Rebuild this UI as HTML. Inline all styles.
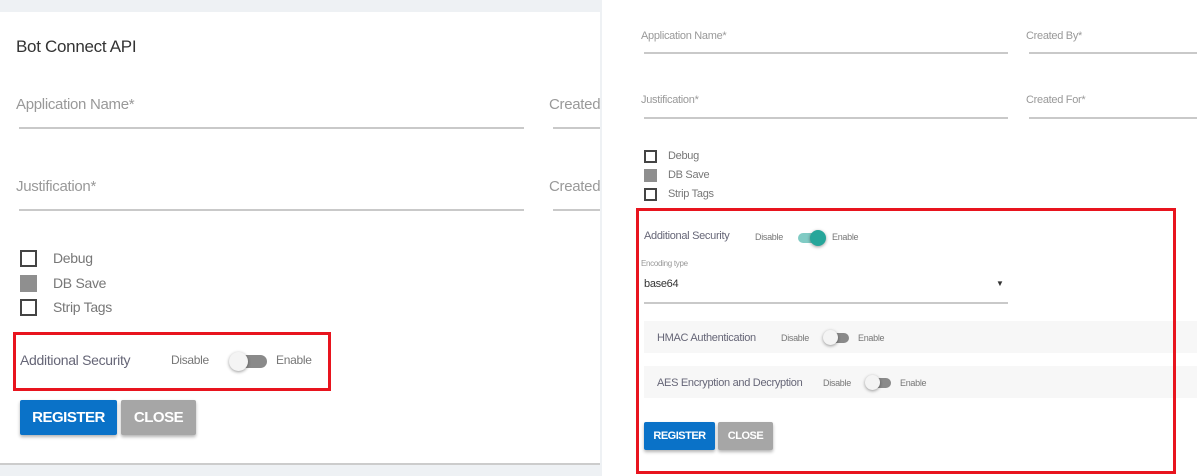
<!DOCTYPE html>
<html><head><meta charset="utf-8"><style>
*{margin:0;padding:0;box-sizing:border-box}
body{width:1197px;height:476px;position:relative;background:#fff;font-family:"Liberation Sans",Arial,sans-serif;overflow:hidden;color:#777;letter-spacing:-0.3px}
.a{position:absolute;white-space:nowrap}
.ln{position:absolute;height:2px;background:#c9c9c9}
.cb{position:absolute;border:2px solid #444;background:#fff}
.cbf{position:absolute;background:#8f8f8f}
.red{position:absolute;border:3px solid #e8141e}
.btn{position:absolute;color:#fff;font-weight:bold;display:flex;align-items:center;justify-content:center;border-radius:2px;box-shadow:0 2px 3px rgba(0,0,0,.3);letter-spacing:-0.5px}
.trk{position:absolute;border-radius:8px;background:#8a8a8a}
.knob{position:absolute;border-radius:50%;background:#f4f4f4;box-shadow:0 1px 3px rgba(0,0,0,.4)}
</style></head><body>
<div class="a" style="left:0;top:0;width:602px;height:12px;background:#eef1f4"></div>
<div class="a" style="left:0;top:463px;width:602px;height:13px;background:#eef1f4;border-top:2px solid #ccc"></div>
<div class="a" style="left:600px;top:0;width:2px;height:476px;background:#eef1f4"></div>
<div class="a" style="left:16px;top:37px;font-size:17px;color:#333">Bot Connect API</div>
<div class="a" style="left:16px;top:96px;font-size:15px;color:#999">Application Name*</div>
<div class="ln" style="left:19px;top:127px;width:505px"></div>
<div class="a" style="left:549px;top:96px;font-size:15px;color:#999;width:51px;overflow:hidden">Created</div>
<div class="ln" style="left:553px;top:127px;width:47px"></div>
<div class="a" style="left:16px;top:178px;font-size:15px;color:#999">Justification*</div>
<div class="ln" style="left:19px;top:209px;width:505px"></div>
<div class="a" style="left:549px;top:178px;font-size:15px;color:#999;width:51px;overflow:hidden">Created</div>
<div class="ln" style="left:553px;top:209px;width:47px"></div>
<div class="cb" style="left:20px;top:250px;width:17px;height:17px"></div>
<div class="a" style="left:53px;top:250px;font-size:14px;color:#777">Debug</div>
<div class="cbf" style="left:20px;top:275px;width:17px;height:17px"></div>
<div class="a" style="left:53px;top:275px;font-size:14px;color:#777">DB Save</div>
<div class="cb" style="left:20px;top:299px;width:17px;height:17px"></div>
<div class="a" style="left:53px;top:299px;font-size:14px;color:#777">Strip Tags</div>
<div class="red" style="left:13px;top:332px;width:318px;height:59px"></div>
<div class="a" style="left:20px;top:352px;font-size:14px;color:#667">Additional Security</div>
<div class="a" style="left:171px;top:353px;font-size:12px;color:#777">Disable</div>
<div class="trk" style="left:234px;top:355px;width:33px;height:13px"></div>
<div class="knob" style="left:229px;top:352px;width:19px;height:19px"></div>
<div class="a" style="left:276px;top:353px;font-size:12px;color:#777">Enable</div>
<div class="btn" style="left:20px;top:400px;width:97px;height:35px;background:#0a72c8;font-size:15px">REGISTER</div>
<div class="btn" style="left:121px;top:400px;width:75px;height:35px;background:#a6a6a6;font-size:15px">CLOSE</div>
<div class="a" style="left:641px;top:30px;font-size:11px;color:#999">Application Name*</div>
<div class="ln" style="left:644px;top:52px;width:364px"></div>
<div class="a" style="left:1026px;top:30px;font-size:11px;color:#999">Created By*</div>
<div class="ln" style="left:1029px;top:52px;width:168px"></div>
<div class="a" style="left:641px;top:94px;font-size:11px;color:#999">Justification*</div>
<div class="ln" style="left:644px;top:117px;width:364px"></div>
<div class="a" style="left:1026px;top:94px;font-size:11px;color:#999">Created For*</div>
<div class="ln" style="left:1029px;top:117px;width:168px"></div>
<div class="cb" style="left:644px;top:150px;width:13px;height:13px"></div>
<div class="a" style="left:668px;top:150px;font-size:11px;color:#777">Debug</div>
<div class="cbf" style="left:644px;top:169px;width:13px;height:13px"></div>
<div class="a" style="left:668px;top:169px;font-size:11px;color:#777">DB Save</div>
<div class="cb" style="left:644px;top:188px;width:13px;height:13px"></div>
<div class="a" style="left:668px;top:188px;font-size:11px;color:#777">Strip Tags</div>
<div class="a" style="left:644px;top:321px;width:553px;height:32px;background:#f7f7f7"></div>
<div class="a" style="left:644px;top:366px;width:553px;height:32px;background:#f7f7f7"></div>
<div class="red" style="left:636px;top:208px;width:540px;height:266px"></div>
<div class="a" style="left:644px;top:230px;font-size:11px;color:#667">Additional Security</div>
<div class="a" style="left:755px;top:232px;font-size:9px;color:#777">Disable</div>
<div class="trk" style="left:798px;top:233px;width:25px;height:10px;background:#80cbc4"></div>
<div class="knob" style="left:810px;top:230px;width:16px;height:16px;background:#26a69a"></div>
<div class="a" style="left:832px;top:232px;font-size:9px;color:#777">Enable</div>
<div class="a" style="left:641px;top:259px;font-size:8px;color:#999">Encoding type</div>
<div class="a" style="left:644px;top:278px;font-size:11px;color:#333">base64</div>
<div class="a" style="left:996px;top:279px;font-size:8px;color:#333">▼</div>
<div class="ln" style="left:644px;top:302px;width:364px"></div>
<div class="a" style="left:657px;top:332px;font-size:11px;color:#667">HMAC Authentication</div>
<div class="a" style="left:781px;top:333px;font-size:9px;color:#777">Disable</div>
<div class="trk" style="left:826px;top:333px;width:23px;height:10px"></div>
<div class="knob" style="left:823px;top:330px;width:15px;height:15px"></div>
<div class="a" style="left:858px;top:333px;font-size:9px;color:#777">Enable</div>
<div class="a" style="left:657px;top:377px;font-size:11px;color:#667">AES Encryption and Decryption</div>
<div class="a" style="left:823px;top:378px;font-size:9px;color:#777">Disable</div>
<div class="trk" style="left:868px;top:378px;width:23px;height:10px"></div>
<div class="knob" style="left:865px;top:375px;width:15px;height:15px"></div>
<div class="a" style="left:900px;top:378px;font-size:9px;color:#777">Enable</div>
<div class="btn" style="left:644px;top:422px;width:71px;height:28px;background:#0a72c8;font-size:11px">REGISTER</div>
<div class="btn" style="left:718px;top:422px;width:55px;height:28px;background:#a6a6a6;font-size:11px">CLOSE</div>
</body></html>
